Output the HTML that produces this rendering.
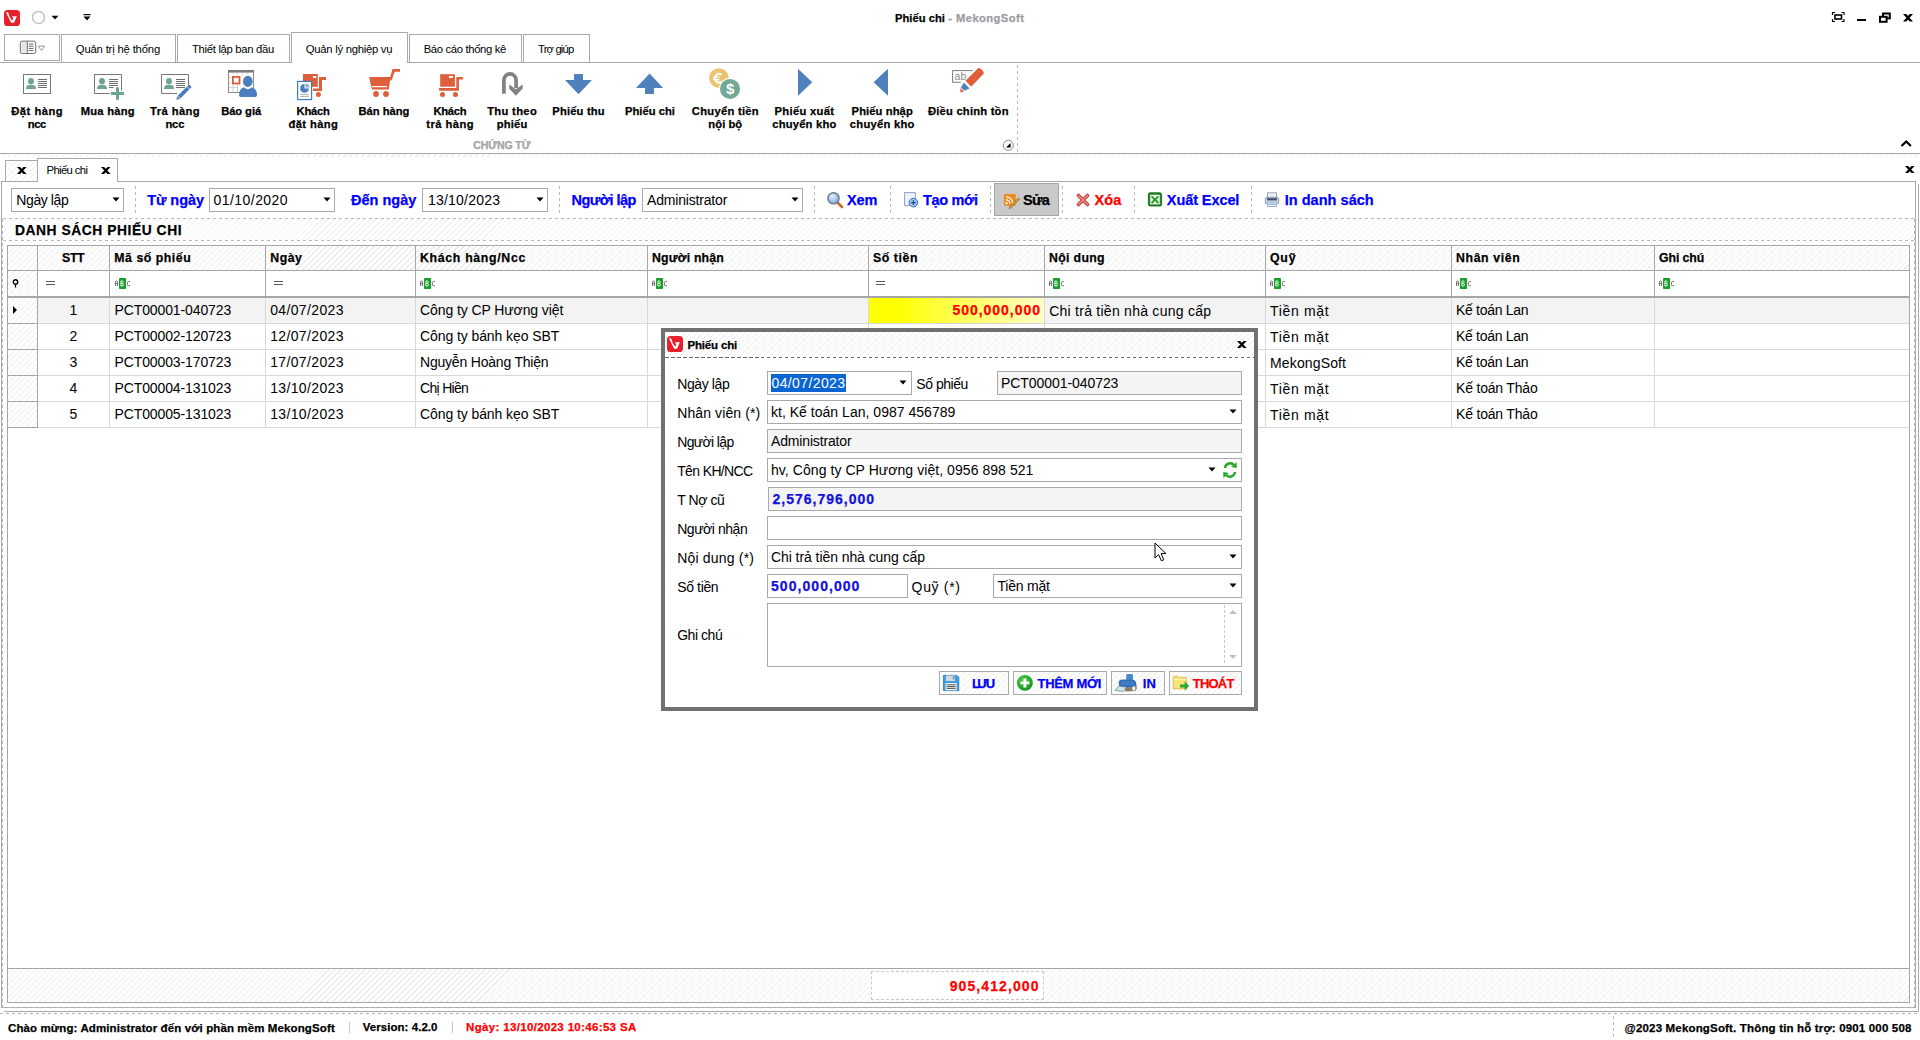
<!DOCTYPE html>
<html><head><meta charset="utf-8"><title>Phiếu chi - MekongSoft</title>
<style>
html,body{margin:0;padding:0;width:1920px;height:1040px;overflow:hidden;background:#fff;}
body{position:relative;font-family:"Liberation Sans",sans-serif;color:#000;}
.a{position:absolute;}
.t{position:absolute;white-space:nowrap;}
.b{-webkit-text-stroke:0.25px currentColor;}
svg.a{overflow:visible;}
</style></head><body>
<svg class="a" style="left:4px;top:10px;" width="16" height="16" viewBox="0 0 16 16"><rect x="0" y="0" width="16" height="16" rx="3.6" fill="#e8202a"/><path d="M2.1 2.6 L3.5 2 L4.7 3.6 L5.7 7.2 L8.3 10.8 L9.5 7.8 L8.2 7.3 L8.2 6.3 L12.9 6.3 L10 12.8 L7.1 12.8 Z" fill="#fff"/></svg>
<svg class="a" style="left:31px;top:10px;" width="16" height="16" viewBox="0 0 16 16"><circle cx="7.5" cy="7.5" r="6" fill="none" stroke="#c4c4c4" stroke-width="1.6"/></svg>
<svg class="a" style="left:51px;top:15px;" width="10" height="6" viewBox="0 0 10 6"><path d="M0.5 0.8 L7.5 0.8 L4 4.5 Z" fill="#000"/></svg>
<svg class="a" style="left:83px;top:13px;" width="10" height="10" viewBox="0 0 10 10"><rect x="0.5" y="1" width="7" height="1.2" fill="#000"/><path d="M0.5 3.5 L7.5 3.5 L4 7.5 Z" fill="#000"/></svg>
<div class="t b" style="left:895.00px;top:13.00px;font-size:11.2px;line-height:11.2px;font-weight:bold;letter-spacing:0.025px;">Phiếu chi</div>
<div class="t b" style="left:948.30px;top:13.00px;font-size:11.2px;line-height:11.2px;font-weight:bold;color:#9b9ba2;letter-spacing:0.432px;">- MekongSoft</div>
<svg class="a" style="left:1832px;top:12px;" width="13" height="11" viewBox="0 0 13 11"><path d="M0.5 3 V0.5 H3 M9.5 0.5 H12 V3 M12 7 V9.5 H9.5 M3 9.5 H0.5 V7" fill="none" stroke="#000" stroke-width="1.2"/><rect x="3" y="3" width="6.5" height="4" fill="none" stroke="#000" stroke-width="1.6"/></svg>
<div class="a" style="left:1857px;top:19px;width:9px;height:2.4px;background:#000;"></div>
<svg class="a" style="left:1879px;top:12px;" width="12" height="11" viewBox="0 0 12 11"><rect x="4" y="1.5" width="6.8" height="4.8" fill="none" stroke="#000" stroke-width="2"/><rect x="1" y="4.8" width="6.6" height="5" fill="#fff" stroke="#000" stroke-width="2"/></svg>
<div class="a" style="left:0px;top:62px;width:1920px;height:1px;background:#a8a8a8;"></div>
<div class="a" style="left:4px;top:34px;width:56px;height:27px;border:1px solid #a9a9a9;background:#fff;box-sizing:border-box;"></div>
<div class="a" style="left:61px;top:34px;width:115px;height:28px;border:1px solid #a9a9a9;border-bottom:none;background:#fff;box-sizing:border-box;"></div>
<div class="a" style="left:177px;top:34px;width:113px;height:28px;border:1px solid #a9a9a9;border-bottom:none;background:#fff;box-sizing:border-box;"></div>
<div class="a" style="left:409px;top:34px;width:113px;height:28px;border:1px solid #a9a9a9;border-bottom:none;background:#fff;box-sizing:border-box;"></div>
<div class="a" style="left:523px;top:34px;width:67px;height:28px;border:1px solid #a9a9a9;border-bottom:none;background:#fff;box-sizing:border-box;"></div>
<div class="a" style="left:291px;top:32px;width:117px;height:31px;border:1px solid #a9a9a9;border-bottom:none;background:#fff;box-sizing:border-box;"></div>
<svg class="a" style="left:19px;top:40px;" width="28" height="16" viewBox="0 0 28 16"><rect x="1.3" y="1.1" width="15.4" height="12.4" rx="2" fill="#fff" stroke="#6d6d6d" stroke-width="1"/><rect x="2.2" y="2" width="5.6" height="10.6" rx="1" fill="#e6e6e6"/><line x1="8.3" y1="1.1" x2="8.3" y2="13.5" stroke="#6d6d6d" stroke-width="1"/><path d="M9.8 4H14.5M9.8 6.2H14.5M9.8 8.4H14.5M9.8 10.6H14.5" stroke="#555" stroke-width="0.9"/><path d="M19.4 6.1 L25.6 6.1 L22.5 10.6 Z" fill="none" stroke="#8a8a8a" stroke-width="0.9"/></svg>
<div class="t" style="left:75.80px;top:44.00px;font-size:11.3px;line-height:11.3px;letter-spacing:-0.181px;">Quản trị hệ thống</div>
<div class="t" style="left:192.00px;top:44.00px;font-size:11.3px;line-height:11.3px;letter-spacing:-0.313px;">Thiết lập ban đầu</div>
<div class="t" style="left:305.80px;top:44.00px;font-size:11.3px;line-height:11.3px;letter-spacing:-0.273px;">Quản lý nghiệp vụ</div>
<div class="t" style="left:423.70px;top:44.00px;font-size:11.3px;line-height:11.3px;letter-spacing:-0.355px;">Báo cáo thống kê</div>
<div class="t" style="left:538.00px;top:44.00px;font-size:11.3px;line-height:11.3px;letter-spacing:-0.850px;">Trợ giúp</div>
<div class="a" style="left:0px;top:153px;width:1920px;height:1px;background:#a8a8a8;"></div>
<div class="t b" style="left:11.25px;top:106.00px;font-size:11.2px;line-height:11.2px;font-weight:bold;letter-spacing:0.511px;">Đặt hàng</div>
<div class="t b" style="left:27.75px;top:119.00px;font-size:11.2px;line-height:11.2px;font-weight:bold;letter-spacing:-0.402px;">ncc</div>
<div class="t b" style="left:80.65px;top:106.00px;font-size:11.2px;line-height:11.2px;font-weight:bold;letter-spacing:0.260px;">Mua hàng</div>
<div class="t b" style="left:150.05px;top:106.00px;font-size:11.2px;line-height:11.2px;font-weight:bold;letter-spacing:0.430px;">Trả hàng</div>
<div class="t b" style="left:165.40px;top:119.00px;font-size:11.2px;line-height:11.2px;font-weight:bold;letter-spacing:-0.152px;">ncc</div>
<div class="t b" style="left:221.20px;top:106.00px;font-size:11.2px;line-height:11.2px;font-weight:bold;letter-spacing:-0.077px;">Báo giá</div>
<div class="t b" style="left:296.60px;top:106.00px;font-size:11.2px;line-height:11.2px;font-weight:bold;letter-spacing:-0.260px;">Khách</div>
<div class="t b" style="left:288.40px;top:119.00px;font-size:11.2px;line-height:11.2px;font-weight:bold;letter-spacing:0.417px;">đặt hàng</div>
<div class="t b" style="left:358.45px;top:106.00px;font-size:11.2px;line-height:11.2px;font-weight:bold;">Bán hàng</div>
<div class="t b" style="left:433.40px;top:106.00px;font-size:11.2px;line-height:11.2px;font-weight:bold;letter-spacing:-0.260px;">Khách</div>
<div class="t b" style="left:426.35px;top:119.00px;font-size:11.2px;line-height:11.2px;font-weight:bold;letter-spacing:0.444px;">trả hàng</div>
<div class="t b" style="left:487.20px;top:106.00px;font-size:11.2px;line-height:11.2px;font-weight:bold;letter-spacing:0.330px;">Thu theo</div>
<div class="t b" style="left:496.75px;top:119.00px;font-size:11.2px;line-height:11.2px;font-weight:bold;letter-spacing:0.157px;">phiếu</div>
<div class="t b" style="left:552.25px;top:106.00px;font-size:11.2px;line-height:11.2px;font-weight:bold;letter-spacing:0.184px;">Phiếu thu</div>
<div class="t b" style="left:625.00px;top:106.00px;font-size:11.2px;line-height:11.2px;font-weight:bold;letter-spacing:0.025px;">Phiếu chi</div>
<div class="t b" style="left:691.85px;top:106.00px;font-size:11.2px;line-height:11.2px;font-weight:bold;letter-spacing:0.279px;">Chuyển tiền</div>
<div class="t b" style="left:708.35px;top:119.00px;font-size:11.2px;line-height:11.2px;font-weight:bold;letter-spacing:0.060px;">nội bộ</div>
<div class="t b" style="left:774.55px;top:106.00px;font-size:11.2px;line-height:11.2px;font-weight:bold;letter-spacing:0.317px;">Phiếu xuất</div>
<div class="t b" style="left:772.20px;top:119.00px;font-size:11.2px;line-height:11.2px;font-weight:bold;letter-spacing:0.216px;">chuyển kho</div>
<div class="t b" style="left:851.60px;top:106.00px;font-size:11.2px;line-height:11.2px;font-weight:bold;letter-spacing:0.092px;">Phiếu nhập</div>
<div class="t b" style="left:849.85px;top:119.00px;font-size:11.2px;line-height:11.2px;font-weight:bold;letter-spacing:0.272px;">chuyển kho</div>
<div class="t b" style="left:928.00px;top:106.00px;font-size:11.2px;line-height:11.2px;font-weight:bold;letter-spacing:0.216px;">Điều chinh tồn</div>
<div class="t b" style="left:473.20px;top:140.00px;font-size:10.6px;line-height:10.6px;font-weight:bold;color:#a3a3a3;letter-spacing:-0.126px;">CHỨNG TỪ</div>
<div class="a" style="left:1017px;top:65px;width:1px;height:88px;background:repeating-linear-gradient(180deg,#b8b8b8 0 3px,transparent 3px 6px);"></div>
<svg class="a" style="left:1002px;top:139px;" width="13" height="13" viewBox="0 0 13 13"><circle cx="6.3" cy="6.3" r="5" fill="#fff" stroke="#8a8a8a" stroke-width="1"/><path d="M4 8.6 L8.6 8.6 L8.6 4 Z" fill="#000"/></svg>
<svg class="a" style="left:1900px;top:138.5px;" width="13" height="9" viewBox="0 0 13 9"><path d="M1.5 7 L6.2 2.5 L10.9 7" fill="none" stroke="#000" stroke-width="2.2"/></svg>
<div class="a" style="left:0px;top:154px;width:1920px;height:3px;background:#fff repeating-linear-gradient(-45deg,#fff 0,#fff 3.45px,#ececec 3.45px,#ececec 4.24px);"></div>
<div class="a" style="left:5px;top:160px;width:31px;height:21px;background:#fff repeating-linear-gradient(-45deg,#fff 0,#fff 3.45px,#ececec 3.45px,#ececec 4.24px);border:1px solid #a9a9a9;border-bottom:none;"></div>
<div class="a" style="left:37px;top:158px;width:79px;height:24px;background:#fff;border:1px solid #a9a9a9;border-bottom:none;"></div>
<svg class="a" style="left:16.5px;top:167px;" width="9.6" height="7" viewBox="0 0 9.6 7"><path d="M0 0 H3.1 L9.6 7 H6.5 Z M6.5 0 H9.6 L3.1 7 H0 Z" fill="#000"/></svg>
<svg class="a" style="left:1902.6px;top:13.8px;" width="10" height="7.5" viewBox="0 0 10 7.5"><path d="M0 0 H3.3 L10 7.5 H6.7 Z M6.7 0 H10 L3.3 7.5 H0 Z" fill="#000"/></svg>
<svg class="a" style="left:100.6px;top:167px;" width="9.6" height="7" viewBox="0 0 9.6 7"><path d="M0 0 H3.1 L9.6 7 H6.5 Z M6.5 0 H9.6 L3.1 7 H0 Z" fill="#000"/></svg>
<div class="t" style="left:46.50px;top:165.00px;font-size:11.3px;line-height:11.3px;letter-spacing:-0.622px;">Phiếu chi</div>
<svg class="a" style="left:1904.7px;top:166.3px;" width="9.6" height="7" viewBox="0 0 9.6 7"><path d="M0 0 H3.1 L9.6 7 H6.5 Z M6.5 0 H9.6 L3.1 7 H0 Z" fill="#000"/></svg>
<div class="a" style="left:1px;top:181px;width:1915px;height:827px;background:#fff;border:1px solid #a9a9a9;box-sizing:border-box;"></div>
<div class="a" style="left:1918px;top:184px;width:1px;height:828px;background:#a9a9a9;"></div>
<div class="a" style="left:38px;top:181px;width:79px;height:1px;background:#fff;"></div>
<div class="a" style="left:4px;top:1011px;width:1915px;height:1px;background:#a9a9a9;"></div>
<div class="a" style="left:0px;top:1013px;width:1920px;height:1px;background:repeating-linear-gradient(90deg,#b4b4b4 0 3px,transparent 3px 6px);"></div>
<div class="a" style="left:2px;top:219px;width:1px;height:788px;background:repeating-linear-gradient(180deg,#b8b8b8 0 3px,transparent 3px 6px);"></div>
<div class="a" style="left:1914px;top:219px;width:1px;height:788px;background:repeating-linear-gradient(180deg,#b8b8b8 0 3px,transparent 3px 6px);"></div>
<div class="a" style="left:2px;top:1007px;width:1913px;height:1px;background:repeating-linear-gradient(90deg,#b8b8b8 0 3px,transparent 3px 6px);"></div>
<div class="a" style="left:3px;top:219px;width:1911px;height:21px;background:#fff repeating-linear-gradient(-45deg,#fff 0,#fff 3.45px,#f3f3f3 3.45px,#f3f3f3 4.24px);"></div>
<div class="a" style="left:3px;top:218px;width:1911px;height:1px;background:repeating-linear-gradient(90deg,#b8b8b8 0 3px,transparent 3px 6px);"></div>
<div class="a" style="left:3px;top:240px;width:1911px;height:1px;background:repeating-linear-gradient(90deg,#b8b8b8 0 3px,transparent 3px 6px);"></div>
<div class="t b" style="left:15.00px;top:224.00px;font-size:13.8px;line-height:13.8px;font-weight:bold;letter-spacing:0.563px;">DANH SÁCH PHIẾU CHI</div>
<div class="a" style="left:11px;top:188px;width:113px;height:24px;border:1px solid #a9a9a9;box-sizing:border-box;background:#fff;"></div>
<svg class="a" style="left:111.5px;top:197px;" width="9" height="6" viewBox="0 0 9 6"><path d="M0.5 0.5 L7.5 0.5 L4 4.5 Z" fill="#000"/></svg>
<div class="t" style="left:16.30px;top:193.00px;font-size:14px;line-height:14px;letter-spacing:-0.408px;">Ngày lập</div>
<div class="a" style="left:135px;top:186px;width:1px;height:29px;background:repeating-linear-gradient(180deg,#b8b8b8 0 3px,transparent 3px 6px);"></div>
<div class="t b" style="left:147.20px;top:193.00px;font-size:14.5px;line-height:14.5px;font-weight:bold;color:#0000ff;letter-spacing:-0.071px;">Từ ngày</div>
<div class="a" style="left:209px;top:188px;width:126px;height:24px;border:1px solid #a9a9a9;box-sizing:border-box;background:#fff;"></div>
<svg class="a" style="left:322.5px;top:197px;" width="9" height="6" viewBox="0 0 9 6"><path d="M0.5 0.5 L7.5 0.5 L4 4.5 Z" fill="#000"/></svg>
<div class="t" style="left:213.60px;top:193.00px;font-size:14px;line-height:14px;letter-spacing:0.437px;">01/10/2020</div>
<div class="t b" style="left:351.00px;top:193.00px;font-size:14.5px;line-height:14.5px;font-weight:bold;color:#0000ff;letter-spacing:0.019px;">Đến ngày</div>
<div class="a" style="left:422px;top:188px;width:126px;height:24px;border:1px solid #a9a9a9;box-sizing:border-box;background:#fff;"></div>
<svg class="a" style="left:535.5px;top:197px;" width="9" height="6" viewBox="0 0 9 6"><path d="M0.5 0.5 L7.5 0.5 L4 4.5 Z" fill="#000"/></svg>
<div class="t" style="left:427.90px;top:193.00px;font-size:14px;line-height:14px;letter-spacing:0.226px;">13/10/2023</div>
<div class="a" style="left:559px;top:186px;width:1px;height:29px;background:repeating-linear-gradient(180deg,#b8b8b8 0 3px,transparent 3px 6px);"></div>
<div class="t b" style="left:571.50px;top:193.00px;font-size:14.5px;line-height:14.5px;font-weight:bold;color:#0000ff;letter-spacing:-0.543px;">Người lập</div>
<div class="a" style="left:642px;top:188px;width:161px;height:24px;border:1px solid #a9a9a9;box-sizing:border-box;background:#fff;"></div>
<svg class="a" style="left:790.5px;top:197px;" width="9" height="6" viewBox="0 0 9 6"><path d="M0.5 0.5 L7.5 0.5 L4 4.5 Z" fill="#000"/></svg>
<div class="t" style="left:647.00px;top:193.00px;font-size:14px;line-height:14px;letter-spacing:-0.181px;">Administrator</div>
<div class="a" style="left:814px;top:186px;width:1px;height:29px;background:repeating-linear-gradient(180deg,#b8b8b8 0 3px,transparent 3px 6px);"></div>
<div class="a" style="left:890px;top:186px;width:1px;height:29px;background:repeating-linear-gradient(180deg,#b8b8b8 0 3px,transparent 3px 6px);"></div>
<div class="a" style="left:990px;top:186px;width:1px;height:29px;background:repeating-linear-gradient(180deg,#b8b8b8 0 3px,transparent 3px 6px);"></div>
<div class="a" style="left:1062px;top:186px;width:1px;height:29px;background:repeating-linear-gradient(180deg,#b8b8b8 0 3px,transparent 3px 6px);"></div>
<div class="a" style="left:1134px;top:186px;width:1px;height:29px;background:repeating-linear-gradient(180deg,#b8b8b8 0 3px,transparent 3px 6px);"></div>
<div class="a" style="left:1251px;top:186px;width:1px;height:29px;background:repeating-linear-gradient(180deg,#b8b8b8 0 3px,transparent 3px 6px);"></div>
<div class="t b" style="left:846.90px;top:193.00px;font-size:14.5px;line-height:14.5px;font-weight:bold;color:#0000ff;letter-spacing:-0.064px;">Xem</div>
<div class="t b" style="left:923.00px;top:193.00px;font-size:14.5px;line-height:14.5px;font-weight:bold;color:#0000ff;letter-spacing:-0.340px;">Tạo mới</div>
<div class="a" style="left:994px;top:183px;width:65px;height:33px;background:#c9c9c9;border:1px solid #a6a6a6;box-sizing:border-box;"></div>
<div class="t b" style="left:1023.00px;top:193.00px;font-size:14.5px;line-height:14.5px;font-weight:bold;letter-spacing:-0.718px;">Sửa</div>
<div class="t b" style="left:1094.60px;top:193.00px;font-size:14.5px;line-height:14.5px;font-weight:bold;color:#ff0000;letter-spacing:0.054px;">Xóa</div>
<div class="t b" style="left:1166.80px;top:193.00px;font-size:14.5px;line-height:14.5px;font-weight:bold;color:#0000ff;letter-spacing:-0.083px;">Xuất Excel</div>
<div class="t b" style="left:1284.70px;top:193.00px;font-size:14.5px;line-height:14.5px;font-weight:bold;color:#0000ff;letter-spacing:0.034px;">In danh sách</div>
<div class="a" style="left:7px;top:245px;width:1903px;height:758px;background:#fff;border:1px solid #a6a6a6;box-sizing:border-box;"></div>
<div class="a" style="left:8px;top:246px;width:1901px;height:24px;background:#fff repeating-linear-gradient(-45deg,#fff 0,#fff 3.45px,#ececec 3.45px,#ececec 4.24px);"></div>
<div class="a" style="left:8px;top:270px;width:1901px;height:1px;background:#a6a6a6;"></div>
<div class="a" style="left:8px;top:296px;width:1901px;height:2px;background:#a6a6a6;"></div>
<div class="a" style="left:8px;top:271px;width:29px;height:25px;background:#fff repeating-linear-gradient(-45deg,#fff 0,#fff 3.45px,#ececec 3.45px,#ececec 4.24px);"></div>
<div class="a" style="left:8px;top:298px;width:29px;height:25px;background:#fff repeating-linear-gradient(-45deg,#fff 0,#fff 3.45px,#ececec 3.45px,#ececec 4.24px);"></div>
<div class="a" style="left:8px;top:324px;width:29px;height:25px;background:#fff repeating-linear-gradient(-45deg,#fff 0,#fff 3.45px,#ececec 3.45px,#ececec 4.24px);"></div>
<div class="a" style="left:8px;top:350px;width:29px;height:25px;background:#fff repeating-linear-gradient(-45deg,#fff 0,#fff 3.45px,#ececec 3.45px,#ececec 4.24px);"></div>
<div class="a" style="left:8px;top:376px;width:29px;height:25px;background:#fff repeating-linear-gradient(-45deg,#fff 0,#fff 3.45px,#ececec 3.45px,#ececec 4.24px);"></div>
<div class="a" style="left:8px;top:402px;width:29px;height:25px;background:#fff repeating-linear-gradient(-45deg,#fff 0,#fff 3.45px,#ececec 3.45px,#ececec 4.24px);"></div>
<div class="a" style="left:38px;top:298px;width:1871px;height:25px;background:#f3f3f3;"></div>
<div class="a" style="left:869px;top:298px;width:175px;height:25px;background:linear-gradient(90deg,#ffff00 0%,#ffff00 15%,#ffffc8 100%);"></div>
<div class="a" style="left:8px;top:323px;width:29px;height:1px;background:#a6a6a6;"></div>
<div class="a" style="left:38px;top:323px;width:1871px;height:1px;background:#d8d8d8;"></div>
<div class="a" style="left:8px;top:349px;width:29px;height:1px;background:#a6a6a6;"></div>
<div class="a" style="left:38px;top:349px;width:1871px;height:1px;background:#d8d8d8;"></div>
<div class="a" style="left:8px;top:375px;width:29px;height:1px;background:#a6a6a6;"></div>
<div class="a" style="left:38px;top:375px;width:1871px;height:1px;background:#d8d8d8;"></div>
<div class="a" style="left:8px;top:401px;width:29px;height:1px;background:#a6a6a6;"></div>
<div class="a" style="left:38px;top:401px;width:1871px;height:1px;background:#d8d8d8;"></div>
<div class="a" style="left:8px;top:427px;width:29px;height:1px;background:#a6a6a6;"></div>
<div class="a" style="left:38px;top:427px;width:1871px;height:1px;background:#d8d8d8;"></div>
<div class="a" style="left:37px;top:246px;width:1px;height:182px;background:#a6a6a6;"></div>
<div class="a" style="left:109px;top:246px;width:1px;height:50px;background:#a6a6a6;"></div>
<div class="a" style="left:109px;top:298px;width:1px;height:129px;background:#d8d8d8;"></div>
<div class="a" style="left:265px;top:246px;width:1px;height:50px;background:#a6a6a6;"></div>
<div class="a" style="left:265px;top:298px;width:1px;height:129px;background:#d8d8d8;"></div>
<div class="a" style="left:415px;top:246px;width:1px;height:50px;background:#a6a6a6;"></div>
<div class="a" style="left:415px;top:298px;width:1px;height:129px;background:#d8d8d8;"></div>
<div class="a" style="left:647px;top:246px;width:1px;height:50px;background:#a6a6a6;"></div>
<div class="a" style="left:647px;top:298px;width:1px;height:129px;background:#d8d8d8;"></div>
<div class="a" style="left:868px;top:246px;width:1px;height:50px;background:#a6a6a6;"></div>
<div class="a" style="left:868px;top:298px;width:1px;height:129px;background:#d8d8d8;"></div>
<div class="a" style="left:1044px;top:246px;width:1px;height:50px;background:#a6a6a6;"></div>
<div class="a" style="left:1044px;top:298px;width:1px;height:129px;background:#d8d8d8;"></div>
<div class="a" style="left:1265px;top:246px;width:1px;height:50px;background:#a6a6a6;"></div>
<div class="a" style="left:1265px;top:298px;width:1px;height:129px;background:#d8d8d8;"></div>
<div class="a" style="left:1451px;top:246px;width:1px;height:50px;background:#a6a6a6;"></div>
<div class="a" style="left:1451px;top:298px;width:1px;height:129px;background:#d8d8d8;"></div>
<div class="a" style="left:1654px;top:246px;width:1px;height:50px;background:#a6a6a6;"></div>
<div class="a" style="left:1654px;top:298px;width:1px;height:129px;background:#d8d8d8;"></div>
<div class="t b" style="left:62.00px;top:252.00px;font-size:12.3px;line-height:12.3px;font-weight:bold;letter-spacing:-0.312px;">STT</div>
<div class="t b" style="left:114.30px;top:252.00px;font-size:12.3px;line-height:12.3px;font-weight:bold;letter-spacing:0.534px;">Mã số phiếu</div>
<div class="t b" style="left:270.30px;top:252.00px;font-size:12.3px;line-height:12.3px;font-weight:bold;letter-spacing:0.477px;">Ngày</div>
<div class="t b" style="left:420.00px;top:252.00px;font-size:12.3px;line-height:12.3px;font-weight:bold;letter-spacing:0.689px;">Khách hàng/Ncc</div>
<div class="t b" style="left:652.00px;top:252.00px;font-size:12.3px;line-height:12.3px;font-weight:bold;letter-spacing:0.173px;">Người nhận</div>
<div class="t b" style="left:873.00px;top:252.00px;font-size:12.3px;line-height:12.3px;font-weight:bold;letter-spacing:0.568px;">Số tiền</div>
<div class="t b" style="left:1049.00px;top:252.00px;font-size:12.3px;line-height:12.3px;font-weight:bold;letter-spacing:0.333px;">Nội dung</div>
<div class="t b" style="left:1270.00px;top:252.00px;font-size:12.3px;line-height:12.3px;font-weight:bold;letter-spacing:0.792px;">Quỹ</div>
<div class="t b" style="left:1456.00px;top:252.00px;font-size:12.3px;line-height:12.3px;font-weight:bold;letter-spacing:0.629px;">Nhân viên</div>
<div class="t b" style="left:1659.00px;top:252.00px;font-size:12.3px;line-height:12.3px;font-weight:bold;letter-spacing:-0.079px;">Ghi chú</div>
<svg class="a" style="left:12px;top:279px;" width="8" height="10" viewBox="0 0 8 10"><circle cx="3.5" cy="3" r="2.2" fill="#fff" stroke="#000" stroke-width="1.4"/><line x1="3.5" y1="5" x2="3.5" y2="8.5" stroke="#000" stroke-width="1.2"/></svg>
<div class="a" style="left:46px;top:281px;width:9px;height:1px;background:#5a5a5a;"></div>
<div class="a" style="left:46px;top:284px;width:9px;height:1px;background:#5a5a5a;"></div>
<svg class="a" style="left:115px;top:278px;" width="16" height="12" viewBox="0 0 16 12"><path d="M0.5 8 V4 Q0.5 3 1.5 3 Q2.5 3 2.5 4 V8 M0.5 5.6 H2.5" fill="none" stroke="#666" stroke-width="0.9"/><rect x="4" y="0" width="7" height="11" rx="0.8" fill="#16a02a"/><path d="M5.9 3 V8 H7.4 Q8.4 8 8.4 6.8 Q8.4 5.5 7.4 5.5 H5.9 M5.9 3 H7.2 Q8.1 3 8.1 4.2 Q8.1 5.5 7.2 5.5" fill="none" stroke="#fff" stroke-width="0.9"/><path d="M15 3.5 H13.5 Q12.5 3.5 12.5 4.5 V6.8 Q12.5 7.8 13.5 7.8 H15" fill="none" stroke="#666" stroke-width="0.9"/></svg>
<div class="a" style="left:274px;top:281px;width:9px;height:1px;background:#5a5a5a;"></div>
<div class="a" style="left:274px;top:284px;width:9px;height:1px;background:#5a5a5a;"></div>
<svg class="a" style="left:420px;top:278px;" width="16" height="12" viewBox="0 0 16 12"><path d="M0.5 8 V4 Q0.5 3 1.5 3 Q2.5 3 2.5 4 V8 M0.5 5.6 H2.5" fill="none" stroke="#666" stroke-width="0.9"/><rect x="4" y="0" width="7" height="11" rx="0.8" fill="#16a02a"/><path d="M5.9 3 V8 H7.4 Q8.4 8 8.4 6.8 Q8.4 5.5 7.4 5.5 H5.9 M5.9 3 H7.2 Q8.1 3 8.1 4.2 Q8.1 5.5 7.2 5.5" fill="none" stroke="#fff" stroke-width="0.9"/><path d="M15 3.5 H13.5 Q12.5 3.5 12.5 4.5 V6.8 Q12.5 7.8 13.5 7.8 H15" fill="none" stroke="#666" stroke-width="0.9"/></svg>
<svg class="a" style="left:652px;top:278px;" width="16" height="12" viewBox="0 0 16 12"><path d="M0.5 8 V4 Q0.5 3 1.5 3 Q2.5 3 2.5 4 V8 M0.5 5.6 H2.5" fill="none" stroke="#666" stroke-width="0.9"/><rect x="4" y="0" width="7" height="11" rx="0.8" fill="#16a02a"/><path d="M5.9 3 V8 H7.4 Q8.4 8 8.4 6.8 Q8.4 5.5 7.4 5.5 H5.9 M5.9 3 H7.2 Q8.1 3 8.1 4.2 Q8.1 5.5 7.2 5.5" fill="none" stroke="#fff" stroke-width="0.9"/><path d="M15 3.5 H13.5 Q12.5 3.5 12.5 4.5 V6.8 Q12.5 7.8 13.5 7.8 H15" fill="none" stroke="#666" stroke-width="0.9"/></svg>
<div class="a" style="left:876px;top:281px;width:9px;height:1px;background:#5a5a5a;"></div>
<div class="a" style="left:876px;top:284px;width:9px;height:1px;background:#5a5a5a;"></div>
<svg class="a" style="left:1049px;top:278px;" width="16" height="12" viewBox="0 0 16 12"><path d="M0.5 8 V4 Q0.5 3 1.5 3 Q2.5 3 2.5 4 V8 M0.5 5.6 H2.5" fill="none" stroke="#666" stroke-width="0.9"/><rect x="4" y="0" width="7" height="11" rx="0.8" fill="#16a02a"/><path d="M5.9 3 V8 H7.4 Q8.4 8 8.4 6.8 Q8.4 5.5 7.4 5.5 H5.9 M5.9 3 H7.2 Q8.1 3 8.1 4.2 Q8.1 5.5 7.2 5.5" fill="none" stroke="#fff" stroke-width="0.9"/><path d="M15 3.5 H13.5 Q12.5 3.5 12.5 4.5 V6.8 Q12.5 7.8 13.5 7.8 H15" fill="none" stroke="#666" stroke-width="0.9"/></svg>
<svg class="a" style="left:1270px;top:278px;" width="16" height="12" viewBox="0 0 16 12"><path d="M0.5 8 V4 Q0.5 3 1.5 3 Q2.5 3 2.5 4 V8 M0.5 5.6 H2.5" fill="none" stroke="#666" stroke-width="0.9"/><rect x="4" y="0" width="7" height="11" rx="0.8" fill="#16a02a"/><path d="M5.9 3 V8 H7.4 Q8.4 8 8.4 6.8 Q8.4 5.5 7.4 5.5 H5.9 M5.9 3 H7.2 Q8.1 3 8.1 4.2 Q8.1 5.5 7.2 5.5" fill="none" stroke="#fff" stroke-width="0.9"/><path d="M15 3.5 H13.5 Q12.5 3.5 12.5 4.5 V6.8 Q12.5 7.8 13.5 7.8 H15" fill="none" stroke="#666" stroke-width="0.9"/></svg>
<svg class="a" style="left:1456px;top:278px;" width="16" height="12" viewBox="0 0 16 12"><path d="M0.5 8 V4 Q0.5 3 1.5 3 Q2.5 3 2.5 4 V8 M0.5 5.6 H2.5" fill="none" stroke="#666" stroke-width="0.9"/><rect x="4" y="0" width="7" height="11" rx="0.8" fill="#16a02a"/><path d="M5.9 3 V8 H7.4 Q8.4 8 8.4 6.8 Q8.4 5.5 7.4 5.5 H5.9 M5.9 3 H7.2 Q8.1 3 8.1 4.2 Q8.1 5.5 7.2 5.5" fill="none" stroke="#fff" stroke-width="0.9"/><path d="M15 3.5 H13.5 Q12.5 3.5 12.5 4.5 V6.8 Q12.5 7.8 13.5 7.8 H15" fill="none" stroke="#666" stroke-width="0.9"/></svg>
<svg class="a" style="left:1659px;top:278px;" width="16" height="12" viewBox="0 0 16 12"><path d="M0.5 8 V4 Q0.5 3 1.5 3 Q2.5 3 2.5 4 V8 M0.5 5.6 H2.5" fill="none" stroke="#666" stroke-width="0.9"/><rect x="4" y="0" width="7" height="11" rx="0.8" fill="#16a02a"/><path d="M5.9 3 V8 H7.4 Q8.4 8 8.4 6.8 Q8.4 5.5 7.4 5.5 H5.9 M5.9 3 H7.2 Q8.1 3 8.1 4.2 Q8.1 5.5 7.2 5.5" fill="none" stroke="#fff" stroke-width="0.9"/><path d="M15 3.5 H13.5 Q12.5 3.5 12.5 4.5 V6.8 Q12.5 7.8 13.5 7.8 H15" fill="none" stroke="#666" stroke-width="0.9"/></svg>
<svg class="a" style="left:12px;top:305px;" width="6" height="10" viewBox="0 0 6 10"><path d="M1 1 L5 5 L1 9 Z" fill="#000"/></svg>
<div class="t" style="left:69.61px;top:303.00px;font-size:14px;line-height:14px;">1</div>
<div class="t" style="left:114.50px;top:303.00px;font-size:14px;line-height:14px;letter-spacing:-0.115px;">PCT00001-040723</div>
<div class="t" style="left:270.20px;top:303.00px;font-size:14px;line-height:14px;letter-spacing:0.359px;">04/07/2023</div>
<div class="t" style="left:420.00px;top:303.00px;font-size:14px;line-height:14px;letter-spacing:-0.087px;">Công ty CP Hương việt</div>
<div class="t" style="left:1270.00px;top:304.00px;font-size:14px;line-height:14px;letter-spacing:0.680px;">Tiền mặt</div>
<div class="t" style="left:1456.00px;top:303.00px;font-size:14px;line-height:14px;letter-spacing:-0.301px;">Kế toán Lan</div>
<div class="t" style="left:69.61px;top:329.00px;font-size:14px;line-height:14px;">2</div>
<div class="t" style="left:114.50px;top:329.00px;font-size:14px;line-height:14px;letter-spacing:-0.115px;">PCT00002-120723</div>
<div class="t" style="left:270.20px;top:329.00px;font-size:14px;line-height:14px;letter-spacing:0.359px;">12/07/2023</div>
<div class="t" style="left:420.00px;top:329.00px;font-size:14px;line-height:14px;letter-spacing:-0.087px;">Công ty bánh kẹo SBT</div>
<div class="t" style="left:1270.00px;top:330.00px;font-size:14px;line-height:14px;letter-spacing:0.680px;">Tiền mặt</div>
<div class="t" style="left:1456.00px;top:329.00px;font-size:14px;line-height:14px;letter-spacing:-0.301px;">Kế toán Lan</div>
<div class="t" style="left:69.61px;top:355.00px;font-size:14px;line-height:14px;">3</div>
<div class="t" style="left:114.50px;top:355.00px;font-size:14px;line-height:14px;letter-spacing:-0.115px;">PCT00003-170723</div>
<div class="t" style="left:270.20px;top:355.00px;font-size:14px;line-height:14px;letter-spacing:0.359px;">17/07/2023</div>
<div class="t" style="left:420.00px;top:355.00px;font-size:14px;line-height:14px;letter-spacing:-0.203px;">Nguyễn Hoàng Thiện</div>
<div class="t" style="left:1270.00px;top:356.00px;font-size:14px;line-height:14px;letter-spacing:0.143px;">MekongSoft</div>
<div class="t" style="left:1456.00px;top:355.00px;font-size:14px;line-height:14px;letter-spacing:-0.301px;">Kế toán Lan</div>
<div class="t" style="left:69.61px;top:381.00px;font-size:14px;line-height:14px;">4</div>
<div class="t" style="left:114.50px;top:381.00px;font-size:14px;line-height:14px;letter-spacing:-0.115px;">PCT00004-131023</div>
<div class="t" style="left:270.20px;top:381.00px;font-size:14px;line-height:14px;letter-spacing:0.359px;">13/10/2023</div>
<div class="t" style="left:420.00px;top:381.00px;font-size:14px;line-height:14px;letter-spacing:-0.684px;">Chị Hiền</div>
<div class="t" style="left:1270.00px;top:382.00px;font-size:14px;line-height:14px;letter-spacing:0.680px;">Tiền mặt</div>
<div class="t" style="left:1456.00px;top:381.00px;font-size:14px;line-height:14px;letter-spacing:-0.192px;">Kế toán Thảo</div>
<div class="t" style="left:69.61px;top:407.00px;font-size:14px;line-height:14px;">5</div>
<div class="t" style="left:114.50px;top:407.00px;font-size:14px;line-height:14px;letter-spacing:-0.115px;">PCT00005-131023</div>
<div class="t" style="left:270.20px;top:407.00px;font-size:14px;line-height:14px;letter-spacing:0.359px;">13/10/2023</div>
<div class="t" style="left:420.00px;top:407.00px;font-size:14px;line-height:14px;letter-spacing:-0.087px;">Công ty bánh kẹo SBT</div>
<div class="t" style="left:1270.00px;top:408.00px;font-size:14px;line-height:14px;letter-spacing:0.680px;">Tiền mặt</div>
<div class="t" style="left:1456.00px;top:407.00px;font-size:14px;line-height:14px;letter-spacing:-0.192px;">Kế toán Thảo</div>
<div class="t b" style="left:952.50px;top:303.00px;font-size:14px;line-height:14px;font-weight:bold;color:#ff0000;letter-spacing:0.965px;">500,000,000</div>
<div class="t" style="left:1049.20px;top:304.00px;font-size:14px;line-height:14px;letter-spacing:0.256px;">Chi trả tiền nhà cung cấp</div>
<div class="a" style="left:8px;top:968px;width:1901px;height:1px;background:#a6a6a6;"></div>
<div class="a" style="left:8px;top:969px;width:1901px;height:33px;background:#fff repeating-linear-gradient(-45deg,#fff 0,#fff 3.45px,#ececec 3.45px,#ececec 4.24px);"></div>
<div class="a" style="left:871px;top:971px;width:173px;height:29px;background:#fff;border:1px dashed #c8c8c8;box-sizing:border-box;"></div>
<div class="t b" style="left:949.70px;top:979.00px;font-size:14px;line-height:14px;font-weight:bold;color:#ff0000;letter-spacing:1.095px;">905,412,000</div>
<div class="t b" style="left:8.00px;top:1023.00px;font-size:11.5px;line-height:11.5px;font-weight:bold;letter-spacing:0.115px;">Chào mừng: Administrator đến với phần mềm MekongSoft</div>
<div class="a" style="left:349px;top:1022px;width:1px;height:11px;background:#c4c4c4;"></div>
<div class="t b" style="left:362.70px;top:1022.00px;font-size:11.5px;line-height:11.5px;font-weight:bold;letter-spacing:0.050px;">Version: 4.2.0</div>
<div class="a" style="left:452px;top:1022px;width:1px;height:11px;background:#c4c4c4;"></div>
<div class="t b" style="left:466.00px;top:1022.00px;font-size:11.5px;line-height:11.5px;font-weight:bold;color:#ff0000;letter-spacing:0.337px;">Ngày: 13/10/2023 10:46:53 SA</div>
<div class="a" style="left:1613px;top:1016px;width:1px;height:24px;background:repeating-linear-gradient(180deg,#b8b8b8 0 3px,transparent 3px 6px);"></div>
<div class="t b" style="left:1624.60px;top:1023.00px;font-size:11.5px;line-height:11.5px;font-weight:bold;letter-spacing:0.169px;">@2023 MekongSoft. Thông tin hỗ trợ: 0901 000 508</div>
<div class="a" style="left:661px;top:328px;width:597px;height:383px;background:#fff;border:4px solid #717171;box-sizing:border-box;"></div>
<div class="a" style="left:665px;top:332px;width:589px;height:25px;background:#fff repeating-linear-gradient(-45deg,#fff 0,#fff 3.45px,#ececec 3.45px,#ececec 4.24px);"></div>
<div class="a" style="left:665px;top:357px;width:589px;height:1px;background:repeating-linear-gradient(90deg,#6a6a6a 0 3.5px,transparent 3.5px 6px);"></div>
<svg class="a" style="left:667px;top:336px;" width="16" height="16" viewBox="0 0 16 16"><rect x="0" y="0" width="16" height="16" rx="3.6" fill="#e8202a"/><path d="M2.1 2.6 L3.5 2 L4.7 3.6 L5.7 7.2 L8.3 10.8 L9.5 7.8 L8.2 7.3 L8.2 6.3 L12.9 6.3 L10 12.8 L7.1 12.8 Z" fill="#fff"/></svg>
<div class="t b" style="left:687.50px;top:340.00px;font-size:11.5px;line-height:11.5px;font-weight:bold;letter-spacing:-0.178px;">Phiếu chi</div>
<svg class="a" style="left:1237px;top:341px;" width="9.6" height="7" viewBox="0 0 9.6 7"><path d="M0 0 H3.1 L9.6 7 H6.5 Z M6.5 0 H9.6 L3.1 7 H0 Z" fill="#000"/></svg>
<div class="t" style="left:677.20px;top:377.00px;font-size:14px;line-height:14px;letter-spacing:-0.394px;">Ngày lập</div>
<div class="a" style="left:767px;top:371px;width:145px;height:24px;border:1px solid #a9a9a9;box-sizing:border-box;background:#fff;"></div>
<svg class="a" style="left:899px;top:380px;" width="9" height="6" viewBox="0 0 9 6"><path d="M0.5 0.5 L7.5 0.5 L4 4.5 Z" fill="#000"/></svg>
<div class="a" style="left:771px;top:374px;width:75px;height:18px;background:#0a64d2;"></div>
<div class="t" style="left:771.50px;top:376.00px;font-size:14px;line-height:14px;color:#fff;letter-spacing:0.381px;">04/07/2023</div>
<div class="t" style="left:916.30px;top:377.00px;font-size:14px;line-height:14px;letter-spacing:-0.453px;">Số phiếu</div>
<div class="a" style="left:997px;top:371px;width:245px;height:24px;border:1px solid #a9a9a9;box-sizing:border-box;background:#f4f4f4;"></div>
<div class="t" style="left:1001.00px;top:376.00px;font-size:14px;line-height:14px;letter-spacing:-0.065px;">PCT00001-040723</div>
<div class="t" style="left:677.20px;top:406.00px;font-size:14px;line-height:14px;letter-spacing:0.108px;">Nhân viên (*)</div>
<div class="a" style="left:767px;top:400px;width:475px;height:24px;border:1px solid #a9a9a9;box-sizing:border-box;background:#fff;"></div>
<svg class="a" style="left:1229px;top:409px;" width="9" height="6" viewBox="0 0 9 6"><path d="M0.5 0.5 L7.5 0.5 L4 4.5 Z" fill="#000"/></svg>
<div class="t" style="left:771.00px;top:405.00px;font-size:14px;line-height:14px;letter-spacing:0.022px;">kt, Kế toán Lan, 0987 456789</div>
<div class="t" style="left:677.20px;top:435.00px;font-size:14px;line-height:14px;letter-spacing:-0.641px;">Người lập</div>
<div class="a" style="left:767px;top:429px;width:475px;height:24px;border:1px solid #a9a9a9;box-sizing:border-box;background:#f4f4f4;"></div>
<div class="t" style="left:771.00px;top:434.00px;font-size:14px;line-height:14px;letter-spacing:-0.156px;">Administrator</div>
<div class="t" style="left:677.20px;top:464.00px;font-size:14px;line-height:14px;letter-spacing:-0.631px;">Tên KH/NCC</div>
<div class="a" style="left:767px;top:458px;width:475px;height:24px;border:1px solid #a9a9a9;box-sizing:border-box;background:#fff;"></div>
<svg class="a" style="left:1208px;top:467px;" width="9" height="6" viewBox="0 0 9 6"><path d="M0.5 0.5 L7.5 0.5 L4 4.5 Z" fill="#000"/></svg>
<div class="t" style="left:771.00px;top:463.00px;font-size:14px;line-height:14px;letter-spacing:0.061px;">hv, Công ty CP Hương việt, 0956 898 521</div>
<div class="t" style="left:677.20px;top:493.00px;font-size:14px;line-height:14px;letter-spacing:-0.426px;">T Nợ cũ</div>
<div class="a" style="left:768px;top:487px;width:474px;height:24px;border:1px solid #a9a9a9;box-sizing:border-box;background:#f4f4f4;"></div>
<div class="t b" style="left:772.50px;top:492.00px;font-size:14px;line-height:14px;font-weight:bold;color:#1010e0;letter-spacing:0.997px;">2,576,796,000</div>
<div class="t" style="left:677.20px;top:522.00px;font-size:14px;line-height:14px;letter-spacing:-0.455px;">Người nhận</div>
<div class="a" style="left:767px;top:516px;width:475px;height:24px;border:1px solid #a9a9a9;box-sizing:border-box;background:#fff;"></div>
<div class="t" style="left:677.20px;top:551.00px;font-size:14px;line-height:14px;letter-spacing:0.191px;">Nội dung (*)</div>
<div class="a" style="left:767px;top:545px;width:475px;height:24px;border:1px solid #a9a9a9;box-sizing:border-box;background:#fff;"></div>
<svg class="a" style="left:1229px;top:554px;" width="9" height="6" viewBox="0 0 9 6"><path d="M0.5 0.5 L7.5 0.5 L4 4.5 Z" fill="#000"/></svg>
<div class="t" style="left:771.00px;top:550.00px;font-size:14px;line-height:14px;letter-spacing:-0.069px;">Chi trả tiền nhà cung cấp</div>
<div class="t" style="left:677.20px;top:580.00px;font-size:14px;line-height:14px;letter-spacing:-0.364px;">Số tiền</div>
<div class="a" style="left:767px;top:574px;width:141px;height:24px;border:1px solid #a9a9a9;box-sizing:border-box;background:#fff;"></div>
<div class="t b" style="left:771.00px;top:579.00px;font-size:14px;line-height:14px;font-weight:bold;color:#1010e0;letter-spacing:1.055px;">500,000,000</div>
<div class="t" style="left:911.60px;top:580.00px;font-size:14px;line-height:14px;letter-spacing:0.677px;">Quỹ (*)</div>
<div class="a" style="left:993px;top:574px;width:249px;height:24px;border:1px solid #a9a9a9;box-sizing:border-box;background:#fff;"></div>
<svg class="a" style="left:1229px;top:583px;" width="9" height="6" viewBox="0 0 9 6"><path d="M0.5 0.5 L7.5 0.5 L4 4.5 Z" fill="#000"/></svg>
<div class="t" style="left:997.50px;top:579.00px;font-size:14px;line-height:14px;letter-spacing:-0.206px;">Tiền mặt</div>
<div class="t" style="left:677.20px;top:628.00px;font-size:14px;line-height:14px;letter-spacing:-0.458px;">Ghi chú</div>
<div class="a" style="left:767px;top:603px;width:475px;height:64px;border:1px solid #a9a9a9;box-sizing:border-box;background:#fff;"></div>
<div class="a" style="left:1224px;top:605px;width:1px;height:60px;background:repeating-linear-gradient(180deg,#c8c8c8 0 3px,transparent 3px 5px);"></div>
<svg class="a" style="left:1228px;top:609px;" width="10" height="6" viewBox="0 0 10 6"><path d="M1 5 L5 1 L9 5 Z" fill="#c0c0c0"/></svg>
<svg class="a" style="left:1228px;top:654px;" width="10" height="6" viewBox="0 0 10 6"><path d="M1 1 L5 5 L9 1 Z" fill="#c0c0c0"/></svg>
<div class="a" style="left:939px;top:671px;width:70px;height:24px;background:#fff repeating-linear-gradient(-45deg,#fff 0,#fff 3.45px,#ececec 3.45px,#ececec 4.24px);border:1px solid #a9a9a9;box-sizing:border-box;"></div>
<div class="a" style="left:1013px;top:671px;width:94px;height:24px;background:#fff repeating-linear-gradient(-45deg,#fff 0,#fff 3.45px,#ececec 3.45px,#ececec 4.24px);border:1px solid #a9a9a9;box-sizing:border-box;"></div>
<div class="a" style="left:1111px;top:671px;width:54px;height:24px;background:#fff repeating-linear-gradient(-45deg,#fff 0,#fff 3.45px,#ececec 3.45px,#ececec 4.24px);border:1px solid #a9a9a9;box-sizing:border-box;"></div>
<div class="a" style="left:1169px;top:671px;width:73px;height:24px;background:#fff repeating-linear-gradient(-45deg,#fff 0,#fff 3.45px,#ececec 3.45px,#ececec 4.24px);border:1px solid #a9a9a9;box-sizing:border-box;"></div>
<div class="t b" style="left:971.90px;top:677.00px;font-size:13px;line-height:13px;font-weight:bold;color:#0000ff;letter-spacing:-2.457px;">LƯU</div>
<div class="t b" style="left:1037.50px;top:677.00px;font-size:13px;line-height:13px;font-weight:bold;color:#0000ff;letter-spacing:-0.310px;">THÊM MỚI</div>
<div class="t b" style="left:1142.80px;top:677.00px;font-size:13px;line-height:13px;font-weight:bold;color:#0000ff;letter-spacing:0.200px;">IN</div>
<div class="t b" style="left:1192.80px;top:677.00px;font-size:13px;line-height:13px;font-weight:bold;color:#ff0000;letter-spacing:-0.793px;">THOÁT</div>
<svg class="a" style="left:1154px;top:542px;" width="14" height="21" viewBox="0 0 14 21"><path d="M1 1 L1 16 L4.6 12.6 L7.4 18.8 L9.8 17.8 L7.1 11.6 L12 11.6 Z" fill="#fff" stroke="#000" stroke-width="1"/></svg>
<svg class="a" style="left:20px;top:70px" width="36" height="30" viewBox="20 70 36 30"><rect x="23.5" y="74.5" width="27" height="19" fill="#fff" stroke="#777" stroke-width="1"/><ellipse cx="31" cy="81.3" rx="2.9" ry="3.3" fill="#6ca48f"/><path d="M26 89 Q26 85.2 29.5 85 L32.5 85 Q36 85.2 36 89 Z" fill="#6ca48f"/><rect x="38" y="79" width="9" height="1" fill="#6d6d6d"/><rect x="38" y="81" width="9" height="1" fill="#6d6d6d"/><rect x="38" y="83" width="9" height="1" fill="#6d6d6d"/><rect x="38" y="85" width="9" height="1" fill="#6d6d6d"/><rect x="38" y="87" width="9" height="1" fill="#6d6d6d"/></svg>
<svg class="a" style="left:90px;top:70px" width="40" height="34" viewBox="90 70 40 34"><path d="M94.5 90.6 V74.5 H121.5 V90.6 M94.5 93.5 H109.7" fill="none" stroke="#777" stroke-width="1"/><path d="M94.5 74.5 V93.5" stroke="#777" stroke-width="1"/><ellipse cx="102" cy="81.3" rx="2.9" ry="3.3" fill="#6ca48f"/><path d="M97 89 Q97 85.2 100.5 85 L103.5 85 Q107 85.2 107 89 Z" fill="#6ca48f"/><rect x="109" y="79" width="9" height="1" fill="#6d6d6d"/><rect x="109" y="81" width="9" height="1" fill="#6d6d6d"/><rect x="109" y="83" width="9" height="1" fill="#6d6d6d"/><rect x="109" y="85" width="9" height="1" fill="#6d6d6d"/><rect x="109" y="87" width="4.5" height="1" fill="#6d6d6d"/><rect x="111" y="92" width="13" height="3" fill="#6ca48f"/><rect x="116" y="87.2" width="3" height="12.6" fill="#6ca48f"/></svg>
<svg class="a" style="left:158px;top:70px" width="40" height="34" viewBox="158 70 40 34"><path d="M188.5 85.5 V74.5 H161.5 V93.5 H177" fill="none" stroke="#777" stroke-width="1"/><ellipse cx="169" cy="81.3" rx="2.9" ry="3.3" fill="#6ca48f"/><path d="M164 89 Q164 85.2 167.5 85 L170.5 85 Q174 85.2 174 89 Z" fill="#6ca48f"/><rect x="176" y="79" width="9" height="1" fill="#6d6d6d"/><rect x="176" y="81" width="9" height="1" fill="#6d6d6d"/><rect x="176" y="83" width="9" height="1" fill="#6d6d6d"/><rect x="176" y="85" width="9" height="1" fill="#6d6d6d"/><rect x="176" y="87" width="9" height="1" fill="#6d6d6d"/><g transform="rotate(-45 183.6 92.6)"><path d="M173.4 92.6 L176.4 90.7 H192.2 Q193.4 90.7 193.4 91.9 V93.3 Q193.4 94.5 192.2 94.5 H176.4 Z" fill="#4a7fbf"/><path d="M176.9 90.6 V94.6 M190.2 90.6 V94.6" stroke="#fff" stroke-width="0.8"/></g></svg>
<svg class="a" style="left:225px;top:66px" width="36" height="34" viewBox="225 66 36 34"><rect x="228.5" y="70.5" width="25" height="22" fill="#fff" stroke="#8a8a8a" stroke-width="1"/><rect x="228" y="70" width="26" height="2.6" fill="#7a7a7a"/><path d="M233 73V74.5 M237.5 73V74.5 M242.5 73V74.5 M247 73V74.5 M229 77.5H230.5 M229 82.5H230.5 M229 87.5H238 M233 85V92 M237.5 85V92" stroke="#c8c8c8" stroke-width="0.8"/><rect x="232.9" y="76.9" width="6.6" height="6.6" fill="none" stroke="#e05a38" stroke-width="1.8"/><ellipse cx="247.8" cy="81.4" rx="4.8" ry="5.6" fill="#4a7fbf"/><path d="M239 95 Q239 88.6 244 87.2 Q247.8 91.4 251.6 87.2 Q257 88.6 257 95 Q257 97 255 97 H241 Q239 97 239 95 Z" fill="#4a7fbf"/></svg>
<svg class="a" style="left:294px;top:70px" width="36" height="32" viewBox="294 70 36 32"><rect x="303" y="74" width="14.8" height="12.8" fill="#df5f3b"/><rect x="313" y="76" width="3.2" height="2" fill="#fff"/><path d="M319 77 H326 V80 H322 V91 H313 V88.4 H319 Z" fill="#df5f3b"/><circle cx="318.4" cy="94.5" r="2.5" fill="#df5f3b"/><rect x="297.6" y="81.4" width="14" height="18.2" fill="#fff" stroke="#3d7cc8" stroke-width="1.2"/><path d="M304.5 88.4 L304.5 84 A4.4 4.4 0 1 0 308.9 88.4 Z" fill="#4a7fbf"/><path d="M305.4 87.5 V83.4 A4.2 4.2 0 0 1 309.5 87.5 Z" fill="#8fb0d8"/><path d="M300.3 94.4H308.7 M300.3 96.4H308.7" stroke="#999" stroke-width="0.8"/></svg>
<svg class="a" style="left:366px;top:66px" width="38" height="34" viewBox="366 66 38 34"><path d="M369 77 L390.6 77 L388.8 89.6 L372 89.6 Z" fill="#df5f3b"/><rect x="372" y="86" width="15" height="1.2" fill="#fff"/><path d="M389.2 80 L392.6 69 L400 69 L400 71.8 L394.6 71.8 L391.6 80.5 Z" fill="#df5f3b"/><circle cx="376" cy="94" r="2.9" fill="#df5f3b"/><circle cx="386" cy="94" r="2.9" fill="#df5f3b"/></svg>
<svg class="a" style="left:436px;top:70px" width="30" height="30" viewBox="436 70 30 30"><rect x="440.2" y="74.2" width="14.7" height="12.5" fill="#df5f3b"/><rect x="449" y="76" width="4" height="2" fill="#fff"/><path d="M456.3 77 H463 V79.6 H458.9 V90.8 H439.1 V88 H456.3 Z" fill="#df5f3b"/><circle cx="442.5" cy="94.5" r="2.5" fill="#df5f3b"/><circle cx="455.5" cy="94.5" r="2.5" fill="#df5f3b"/></svg>
<svg class="a" style="left:498px;top:68px" width="28" height="32" viewBox="498 68 28 32"><path d="M503.9 93.8 V80 A6.1 6.1 0 0 1 516.1 80 V88" fill="none" stroke="#828282" stroke-width="3.7"/><path d="M509.2 84.4 L515.9 89.2 L522.7 84.4 L522.7 88.4 L515.9 95.8 L509.2 88.4 Z" fill="#828282"/></svg>
<svg class="a" style="left:562px;top:70px" width="34" height="28" viewBox="562 70 34 28"><path d="M574 74 H583 V80.1 H591.9 L578.5 94.3 L565 80.1 H574 Z" fill="#4f81bd"/></svg>
<svg class="a" style="left:633px;top:70px" width="34" height="28" viewBox="633 70 34 28"><path d="M649.6 73.5 L663.1 88 H654 V94 H645 V88 H636 Z" fill="#4f81bd"/></svg>
<svg class="a" style="left:706px;top:66px" width="38" height="36" viewBox="706 66 38 36"><circle cx="718.9" cy="78.1" r="9.9" fill="#ebc46f"/><path d="M721.6 74.6 A4.3 4.3 0 1 0 721.6 81.8" fill="none" stroke="#fff" stroke-width="2"/><path d="M713.2 77.2H719.6 M713.2 79.6H719.6" stroke="#fff" stroke-width="1.2"/><circle cx="730" cy="88.9" r="11" fill="#fff"/><circle cx="730" cy="88.9" r="10" fill="#72a896"/><text x="730.2" y="94.4" text-anchor="middle" font-family="Liberation Sans" font-weight="bold" font-size="15" fill="#fff">$</text></svg>
<svg class="a" style="left:795px;top:66px" width="20" height="32" viewBox="795 66 20 32"><path d="M798 68.7 L812.3 82.2 L798 95.8 Z" fill="#4f81bd"/></svg>
<svg class="a" style="left:871px;top:66px" width="20" height="32" viewBox="871 66 20 32"><path d="M888 68.7 L873.6 82.2 L888 95.8 Z" fill="#4f81bd"/></svg>
<svg class="a" style="left:950px;top:66px" width="38" height="30" viewBox="950 66 38 30"><path d="M972.7 70.6 H952.6 V82.3 H960.8" fill="none" stroke="#7a7a7a" stroke-width="1"/><text x="954.6" y="80.3" font-family="Liberation Sans" font-size="10.5" fill="#8a8a8a">ab</text><path d="M965 80.8 L977.7 68.2 Q979.3 67 980.8 68.4 L983.6 71.4 Q984.8 72.8 983.6 74.2 L971.2 87 Z" fill="#df5f3b" stroke="#fff" stroke-width="0.7"/><path d="M963.8 82.2 L970 88.4 L964.4 91 L960.6 87.4 Z" fill="#4f81bd" stroke="#fff" stroke-width="0.5"/><path d="M960.4 88 L963.8 91.4 L960.4 92.4 Z" fill="#df5f3b"/></svg>
<svg class="a" style="left:825px;top:190px" width="20" height="20" viewBox="825 190 20 20"><defs><radialGradient id="lens" cx="0.4" cy="0.35" r="0.7"><stop offset="0" stop-color="#e8f2ff"/><stop offset="1" stop-color="#6f9fd8"/></radialGradient></defs><path d="M837.5 202.5 L842 207" stroke="#c66a20" stroke-width="2.6" stroke-linecap="round"/><circle cx="833.5" cy="198.3" r="5.6" fill="url(#lens)" stroke="#6d7a8c" stroke-width="1.4"/></svg>
<svg class="a" style="left:902px;top:190px" width="20" height="20" viewBox="902 190 20 20"><rect x="904.6" y="192.6" width="10.8" height="13" fill="#eef3fb" stroke="#8ea4c8" stroke-width="1"/><circle cx="913.4" cy="202.6" r="4.3" fill="#9fc6ee" stroke="#3b6fb0" stroke-width="1"/><path d="M911 202.6H915.8 M913.4 200.2V205" stroke="#1f4f90" stroke-width="1.2"/></svg>
<svg class="a" style="left:1002px;top:192px" width="20" height="18" viewBox="1002 192 20 18"><rect x="1003.9" y="194" width="11.9" height="11.8" rx="1.2" fill="#f08a1c"/><path d="M1006 196.8 A7 7 0 0 1 1013 203.8 M1006 199.8 A4 4 0 0 1 1010 203.8" fill="none" stroke="#fff" stroke-width="1.2"/><circle cx="1006.6" cy="203.2" r="1.1" fill="#fff"/><path d="M1009.5 207 L1018.4 198 L1019.6 199.2 L1010.6 208 L1009 208.3 Z" fill="#e8b040" stroke="#6a4a10" stroke-width="0.6"/></svg>
<svg class="a" style="left:1075px;top:192px" width="16" height="16" viewBox="1075 192 16 16"><path d="M1078.5 195.5 L1087.5 204.5 M1087.5 195.5 L1078.5 204.5" stroke="#c83a3a" stroke-width="3.6" stroke-linecap="round"/><path d="M1078.5 195.5 L1087.5 204.5 M1087.5 195.5 L1078.5 204.5" stroke="#f08a80" stroke-width="1.6" stroke-linecap="round"/></svg>
<svg class="a" style="left:1146px;top:191px" width="18" height="18" viewBox="1146 191 18 18"><rect x="1148.4" y="192.8" width="13.2" height="13.2" rx="1.6" fill="#1f8a1f" stroke="#0d5e0d" stroke-width="0.8"/><rect x="1150.2" y="194.8" width="9.6" height="9.6" fill="#f2f2f2"/><path d="M1151.6 196.4 L1158.4 203 M1158.4 196.4 L1151.6 203" stroke="#1e9a1e" stroke-width="1.8"/></svg>
<svg class="a" style="left:1263px;top:190px" width="18" height="19" viewBox="1263 190 18 19"><rect x="1267.5" y="192.8" width="9" height="6" fill="#eef2f8" stroke="#8fa0b8" stroke-width="0.9"/><rect x="1265.3" y="197.3" width="13.4" height="6.6" rx="1.5" fill="#d6dde8" stroke="#7d8aa0" stroke-width="0.9"/><rect x="1267" y="198.2" width="10" height="2.2" fill="#3b4d6e"/><rect x="1267.8" y="202" width="8.4" height="4.4" fill="#eef2f8" stroke="#8fa0b8" stroke-width="0.9"/><rect x="1269" y="203.4" width="6" height="1.6" fill="#8cc0ea"/></svg>
<svg class="a" style="left:1221px;top:460px" width="18" height="20" viewBox="1221 460 18 20"><path d="M1225 468 A5.2 5.2 0 0 1 1234.2 465.2" fill="none" stroke="#2aa82a" stroke-width="2.4"/><path d="M1236.6 462 L1236.8 468 L1231.2 467 Z" fill="#2aa82a"/><path d="M1235 472 A5.2 5.2 0 0 1 1225.8 474.8" fill="none" stroke="#2aa82a" stroke-width="2.4"/><path d="M1223.4 478 L1223.2 472 L1228.8 473 Z" fill="#2aa82a"/></svg>
<svg class="a" style="left:941px;top:673px" width="20" height="20" viewBox="941 673 20 20"><path d="M943.4 675.4 H957 L958.8 677.2 V690.6 H943.4 Z" fill="#3d9ee6" stroke="#2a78c0" stroke-width="0.8"/><rect x="946" y="675.6" width="9" height="5.4" fill="#d8d8d8"/><rect x="952.8" y="676.2" width="1.6" height="3.2" fill="#3d9ee6"/><rect x="945.6" y="683" width="11" height="7.2" fill="#f6f0e8"/><path d="M946.6 684.8H955.6 M946.6 686.6H955.6 M946.6 688.4H955.6" stroke="#444" stroke-width="0.9"/></svg>
<svg class="a" style="left:1015px;top:673px" width="20" height="20" viewBox="1015 673 20 20"><defs><radialGradient id="gp" cx="0.4" cy="0.35" r="0.7"><stop offset="0" stop-color="#4cd04c"/><stop offset="1" stop-color="#12901a"/></radialGradient></defs><circle cx="1024.9" cy="682.9" r="7.9" fill="url(#gp)"/><path d="M1024.9 678.4V687.4 M1020.4 682.9H1029.4" stroke="#fff" stroke-width="2.9"/></svg>
<svg class="a" style="left:1113px;top:672px" width="26" height="22" viewBox="1113 672 26 22"><path d="M1126.2 680 V675.4 Q1126.2 674 1127.6 674 H1131.8 Q1133 674 1133 675.4 V680 Z" fill="#4a8ad0"/><path d="M1118.6 682 Q1119.6 679.4 1122.6 679.6 L1133 679.8 Q1136.2 680.6 1136.4 684.4 L1136.4 686.4 L1124 688.6 L1119.2 686 Z" fill="#2f6fb8"/><path d="M1120.4 682.2 L1133 682.2 M1120.8 684.2 L1134 684.2" stroke="#5d98d8" stroke-width="0.7"/><path d="M1124.4 688.6 L1136.4 685.8 Q1137.6 689.4 1135.4 691 L1126.2 691.6 Q1124.2 690.8 1124.4 688.6 Z" fill="#8c7a66"/><ellipse cx="1133.8" cy="688.4" rx="1.6" ry="2.2" fill="#f4f4f4"/><path d="M1115 690.4 L1118.6 686.2 L1126.6 687 L1123.4 691.6 Z" fill="#c6e6f2" stroke="#6b6b6b" stroke-width="0.6"/></svg>
<svg class="a" style="left:1171px;top:674px" width="22" height="18" viewBox="1171 674 22 18"><path d="M1173.2 688.8 V677.2 Q1173.2 676.2 1174.2 676.2 H1177.6 L1178.8 677.4 H1185.8 Q1186.6 677.4 1186.6 678.2 V688.8 Z" fill="#f8e27a" stroke="#e2b43a" stroke-width="0.9"/><path d="M1173.6 679.6 H1186.2" stroke="#fff6c0" stroke-width="0.9"/><path d="M1180 684.4 H1184.6 V681.2 L1189.2 685.9 L1184.6 690.6 V687.4 H1180 Z" fill="#2ea82e"/></svg>
</body></html>
